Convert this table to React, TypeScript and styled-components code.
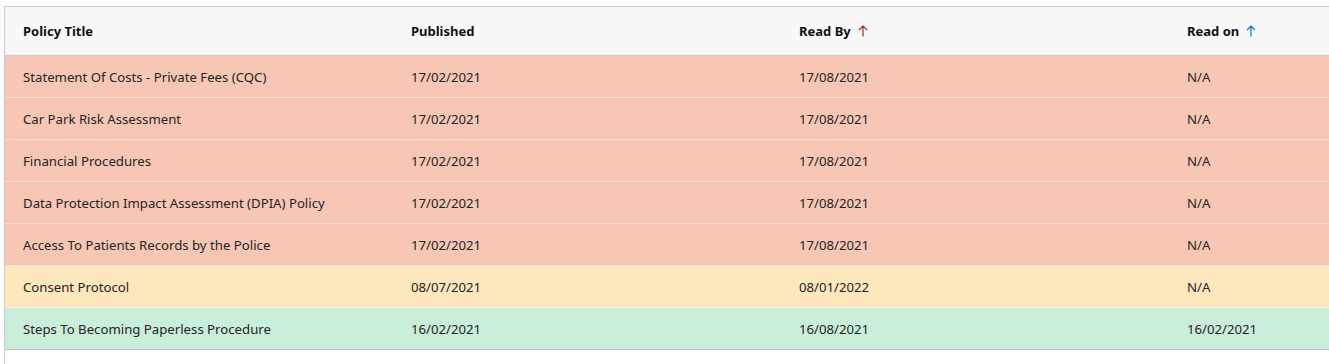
import React from "react";
import styled, { createGlobalStyle } from "styled-components";

const Global = createGlobalStyle`
  html, body { margin: 0; padding: 0; background: #fff; overflow: hidden; }
  body { font-family: "Segoe UI", "Noto Sans", "Open Sans", sans-serif; }
`;

const Page = styled.div`
  padding: 6px 0 0 4px;
  height: 364px;
  box-sizing: border-box;
`;

const Frame = styled.div`
  border-left: 1px solid #c8cad6;
  border-top: 1px solid #c8cad6;
  height: 100%;
  overflow: hidden;
`;

const Row = styled.div<{ $bg: string; $last?: boolean }>`
  display: grid;
  grid-template-columns: repeat(4, 388px);
  height: 42px;
  align-items: center;
  background: ${(p) => p.$bg};
  border-bottom: 1px solid ${(p) => (p.$last ? "#bfc2cf" : "rgba(255,255,255,0.45)")};
  box-sizing: border-box;
`;

const HeaderRow = styled.div`
  display: grid;
  grid-template-columns: repeat(4, 388px);
  height: 49px;
  align-items: center;
  background: #f8f8f8;
  border-bottom: 1px solid #c8cad6;
  box-sizing: border-box;
`;

const HeadCell = styled.div`
  padding-left: 18px;
  font-size: 13px;
  font-weight: 700;
  color: #111;
  display: flex;
  align-items: center;
  gap: 7px;
  white-space: nowrap;
`;

const Cell = styled.div`
  padding-left: 18px;
  font-size: 13.2px;
  color: #242424;
  white-space: nowrap;
`;

const Arrow = ({ color }: { color: string }) => (
  <svg width="10" height="12" viewBox="0 0 10 12" fill="none">
    <path d="M5 11.5V1M1 5L5 1l4 4" stroke={color} strokeWidth="1.2" />
  </svg>
);

const RED = "#f7c6b4";
const YELLOW = "#fde7bd";
const GREEN = "#c9eed9";

const rows = [
  ["Statement Of Costs - Private Fees (CQC)", "17/02/2021", "17/08/2021", "N/A", RED],
  ["Car Park Risk Assessment", "17/02/2021", "17/08/2021", "N/A", RED],
  ["Financial Procedures", "17/02/2021", "17/08/2021", "N/A", RED],
  ["Data Protection Impact Assessment (DPIA) Policy", "17/02/2021", "17/08/2021", "N/A", RED],
  ["Access To Patients Records by the Police", "17/02/2021", "17/08/2021", "N/A", RED],
  ["Consent Protocol", "08/07/2021", "08/01/2022", "N/A", YELLOW],
  ["Steps To Becoming Paperless Procedure", "16/02/2021", "16/08/2021", "16/02/2021", GREEN],
];

export default function App() {
  return (
    <>
      <Global />
      <Page>
        <Frame>
          <HeaderRow>
            <HeadCell>Policy Title</HeadCell>
            <HeadCell>Published</HeadCell>
            <HeadCell>
              Read By <Arrow color="#a4262c" />
            </HeadCell>
            <HeadCell>
              Read on <Arrow color="#0078d4" />
            </HeadCell>
          </HeaderRow>
          {rows.map((r, i) => (
            <Row key={i} $bg={r[4]} $last={i === rows.length - 1}>
              <Cell>{r[0]}</Cell>
              <Cell>{r[1]}</Cell>
              <Cell>{r[2]}</Cell>
              <Cell>{r[3]}</Cell>
            </Row>
          ))}
        </Frame>
      </Page>
    </>
  );
}
